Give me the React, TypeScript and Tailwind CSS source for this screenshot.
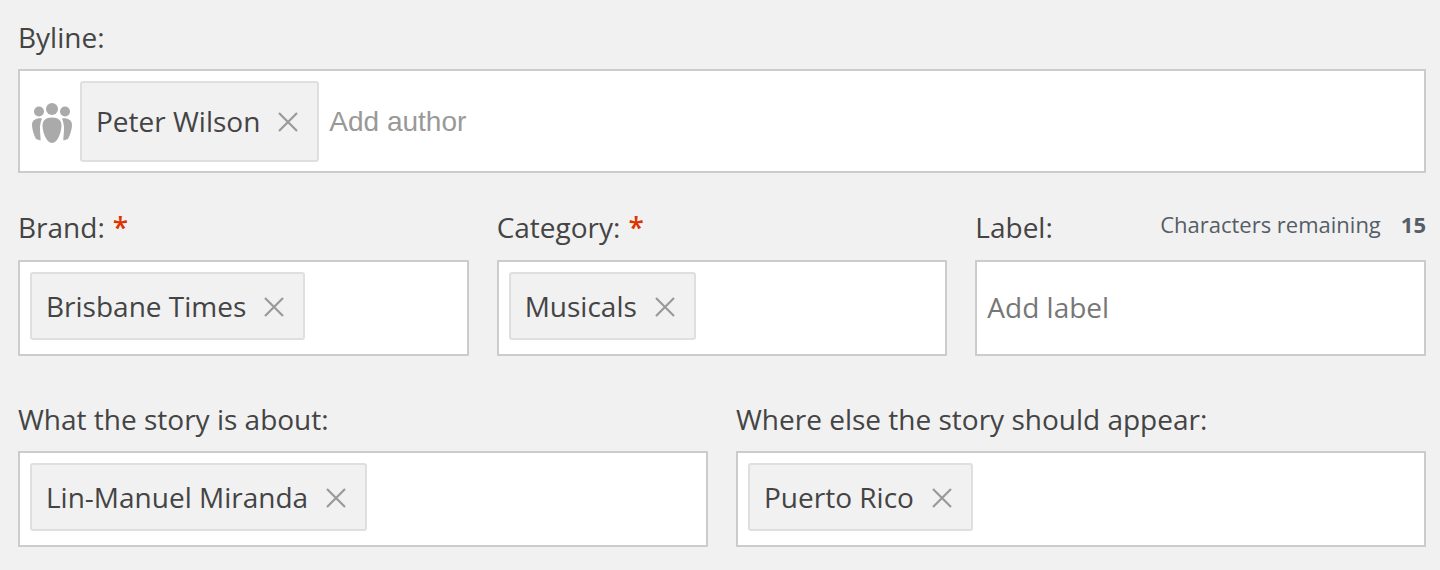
const font = "font-['Open_Sans',sans-serif]";

function Tag({ name, tall }: { name: string; tall?: boolean }) {
  return (
    <div
      className={`flex items-center rounded-[3px] border-2 border-[#dfdfdf] bg-[#f1f1f1] pl-[14px] pr-[18px] text-[28px] text-[#444444] ${
        tall ? "h-[81px]" : "h-[68px]"
      }`}
    >
      <span>{name}</span>
      <svg className="ml-[17px] mt-[2px] h-[22px] w-[22px]" viewBox="0 0 22 22" fill="none" stroke="#999999" strokeWidth="2.200">
        <path d="M2 2 20 20M20 2 2 20" />
      </svg>
    </div>
  );
}

function Box({ children, center, tight }: { children: React.ReactNode; center?: boolean; tight?: boolean }) {
  return (
    <div
      className={`flex h-[96px] border-2 border-[#cccccc] bg-white pl-[10px] ${tight ? "mt-[13px]" : "mt-[14px]"} ${
        center ? "items-center pb-[2px]" : "items-start pt-[10px]"
      }`}
    >
      {children}
    </div>
  );
}

function Label({ text, required }: { text: string; required?: boolean }) {
  return (
    <div className="text-[28px] leading-[37px] text-[#444444]">
      {text}
      {required && <span className="ml-[8px] font-semibold text-[#dd3300]">*</span>}
    </div>
  );
}

function PeopleIcon() {
  return (
    <svg className="mt-[4px] h-[40px] w-[40px]" viewBox="0 0 40 40" fill="#aaaaaa">
      <circle cx="7" cy="8.500" r="5" />
      <circle cx="20" cy="6" r="6" />
      <circle cx="33" cy="8.500" r="5" />
      <path d="M20 14.500c6.500 0 9.500 3 9.500 8 0 6.500-4 17.500-9.500 17.500s-9.500-11-9.500-17.500c0-5 3-8 9.500-8Z" />
      <path d="M10 15.500C4.500 14.800 0 17 0 22c0 4 1.800 10 4 14l4.500 1.500C9 37 8 31 8 25c0-3 .8-6.500 2-9.500Z" />
      <path d="M30 15.500C35.500 14.800 40 17 40 22c0 4-1.800 10-4 14l-4.500 1.500C31 37 32 31 32 25c0-3-.8-6.500-2-9.500Z" />
    </svg>
  );
}

export default function App() {
  return (
    <div className={`${font} h-[570px] w-[1440px] overflow-hidden bg-[#f1f1f1] pl-[18px] pr-[14px] pt-[19px]`}>
      <Label text="Byline:" />
      <div className="mt-[13px] flex h-[104px] items-center border-2 border-[#cccccc] bg-white pl-[12px]">
        <PeopleIcon />
        <div className="ml-[8px]">
          <Tag name="Peter Wilson" tall />
        </div>
        <span className="ml-[10px] mt-[2px] font-['Liberation_Sans',sans-serif] text-[28px] text-[#999999]">Add author</span>
      </div>

      <div className="mt-[36px] grid grid-cols-3 gap-x-[28px]">
        <div>
          <Label text="Brand:" required />
          <Box>
            <Tag name="Brisbane Times" />
          </Box>
        </div>
        <div>
          <Label text="Category:" required />
          <Box>
            <Tag name="Musicals" />
          </Box>
        </div>
        <div>
          <div className="flex h-[37px] items-center justify-between">
            <Label text="Label:" />
            <div className="mb-[7px] flex gap-[20px] text-[22px] leading-[30px] text-[#555d66]">
              <span>Characters remaining</span>
              <span className="font-bold">15</span>
            </div>
          </div>
          <Box center>
            <span className="text-[28px] text-[#777777]">Add label</span>
          </Box>
        </div>
      </div>

      <div className="mt-[45px] grid grid-cols-2 gap-x-[28px]">
        <div>
          <Label text="What the story is about:" />
          <Box tight>
            <Tag name="Lin-Manuel Miranda" />
          </Box>
        </div>
        <div>
          <Label text="Where else the story should appear:" />
          <Box tight>
            <Tag name="Puerto Rico" />
          </Box>
        </div>
      </div>
    </div>
  );
}
